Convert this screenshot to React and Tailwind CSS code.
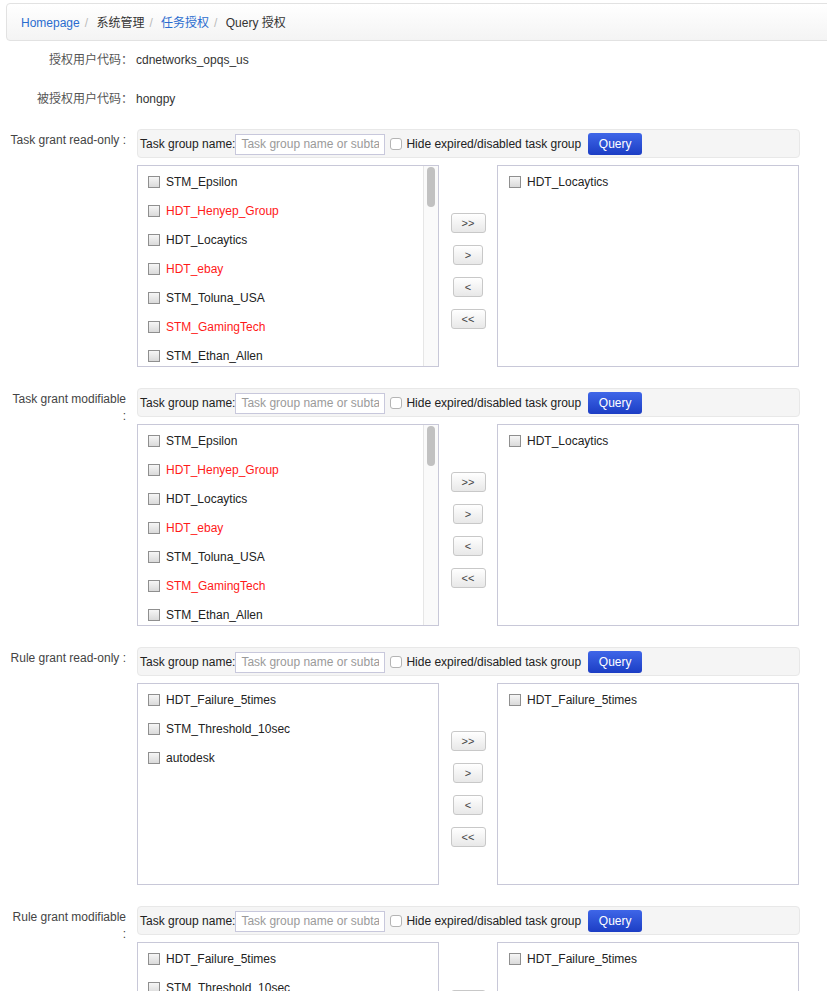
import React from "react";

const taskGroups = [
  { name: "STM_Epsilon" },
  { name: "HDT_Henyep_Group", red: true },
  { name: "HDT_Locaytics" },
  { name: "HDT_ebay", red: true },
  { name: "STM_Toluna_USA" },
  { name: "STM_GamingTech", red: true },
  { name: "STM_Ethan_Allen" },
  { name: "HDT_Sample_Group" },
  { name: "STM_Other" },
];

const rules = [
  { name: "HDT_Failure_5times" },
  { name: "STM_Threshold_10sec" },
  { name: "autodesk" },
];

const sections = [
  { label: "Task grant read-only :", left: taskGroups, right: ["HDT_Locaytics"], scroll: true },
  { label: "Task grant modifiable :", left: taskGroups, right: ["HDT_Locaytics"], scroll: true },
  { label: "Rule grant read-only :", left: rules, right: ["HDT_Failure_5times"], scroll: false },
  { label: "Rule grant modifiable :", left: rules, right: ["HDT_Failure_5times"], scroll: false },
];

const Box = () => (
  <span className="inline-block w-[12px] h-[12px] shrink-0 border border-[#8f8f8f] bg-gradient-to-b from-[#f6f6f6] to-[#dadada]" />
);

const Item = ({ name, red }) => (
  <div className="flex items-center h-[29px] gap-[6px]">
    <Box />
    <span className={red ? "text-[#ff1a1a]" : "text-[#222]"}>{name}</span>
  </div>
);

const MoveButton = ({ label, wide }) => (
  <button
    className={`${wide ? "w-[35px]" : "w-[30px]"} h-[20px] border border-[#c8c8c8] rounded-[3px] bg-gradient-to-b from-white to-[#e8e8e8] text-[11px] text-[#444] leading-none`}
  >
    {label}
  </button>
);

const GrantSection = ({ label, left, right, scroll }) => (
  <div className="flex mb-[21px]">
    <div className="w-[126px] pl-[8px] pt-[3px] text-right leading-[17px] text-[#444]">{label}</div>
    <div className="ml-[11px] w-[663px]">
      <div className="flex items-center h-[29px] pl-[2px] pt-[1px] border border-[#e8e8e8] bg-[#f5f5f5] rounded-[4px]">
        <span className="text-[#222] whitespace-nowrap">Task group name:</span>
        <input
          className="w-[150px] h-[21px] border border-[#c8c8dc] bg-white px-[5px] text-[12px] placeholder:text-[#9a9a9a] outline-none"
          placeholder="Task group name or subtask name"
        />
        <span className="ml-[5px] inline-block w-[12px] h-[12px] rounded-[3px] border border-[#b4b4b4] bg-white" />
        <span className="ml-[4px] text-[#222] whitespace-nowrap">Hide expired/disabled task group</span>
        <button className="ml-[7px] w-[54px] h-[22px] rounded-[3px] bg-gradient-to-b from-[#3f66e8] to-[#1c3dc4] text-white text-[12px]">
          Query
        </button>
      </div>
      <div className="flex mt-[7px] h-[202px]">
        <div className="w-[302px] flex border border-[#c8c8d8] bg-white overflow-hidden">
          <div className="flex-1 pl-[10px] pt-[1px] overflow-hidden">
            {left.map((it) => (
              <Item key={it.name} {...it} />
            ))}
          </div>
          {scroll && (
            <div className="w-[15px] border-l border-[#e6e6e6] bg-[#fafafa] pt-[1px]">
              <div className="mx-auto w-[8px] h-[40px] rounded-full bg-[#c1c1c1]" />
            </div>
          )}
        </div>
        <div className="w-[58px] flex flex-col items-center gap-[12px] pt-[48px]">
          <MoveButton label=">>" wide />
          <MoveButton label=">" />
          <MoveButton label="<" />
          <MoveButton label="<<" wide />
        </div>
        <div className="w-[302px] border border-[#c8c8d8] bg-white pl-[11px] pt-[1px]">
          {right.map((n) => (
            <Item key={n} name={n} />
          ))}
        </div>
      </div>
    </div>
  </div>
);

export default function App() {
  return (
    <div className="w-[827px] min-h-[991px] bg-white text-[12px] text-[#333] font-['Liberation_Sans','Noto_Sans_CJK_SC',sans-serif] overflow-hidden">
      <div className="ml-[6px] mt-[3px] w-[830px] h-[38px] flex items-center px-[14px] pt-[2px] border border-[#e2e2e2] rounded-[4px] bg-gradient-to-b from-white to-[#f4f4f4]">
        <span className="text-[#2a6ccf]">Homepage</span>
        <span className="px-[5px] text-[#bbb]">/&nbsp;</span>
        <span className="text-[#333]">系统管理</span>
        <span className="px-[5px] text-[#bbb]">/&nbsp;</span>
        <span className="text-[#2a6ccf]">任务授权</span>
        <span className="px-[5px] text-[#bbb]">/&nbsp;</span>
        <span className="text-[#333]">Query 授权</span>
      </div>

      <div className="flex h-[39px] mt-[11px] leading-[17px]">
        <div className="w-[133px] text-right text-[#555]">授权用户代码：</div>
        <div className="ml-[3px] text-[#333]">cdnetworks_opqs_us</div>
      </div>
      <div className="flex h-[38px] leading-[17px]">
        <div className="w-[133px] text-right text-[#555]">被授权用户代码：</div>
        <div className="ml-[3px] text-[#333]">hongpy</div>
      </div>

      {sections.map((s) => (
        <GrantSection key={s.label} {...s} />
      ))}
    </div>
  );
}
